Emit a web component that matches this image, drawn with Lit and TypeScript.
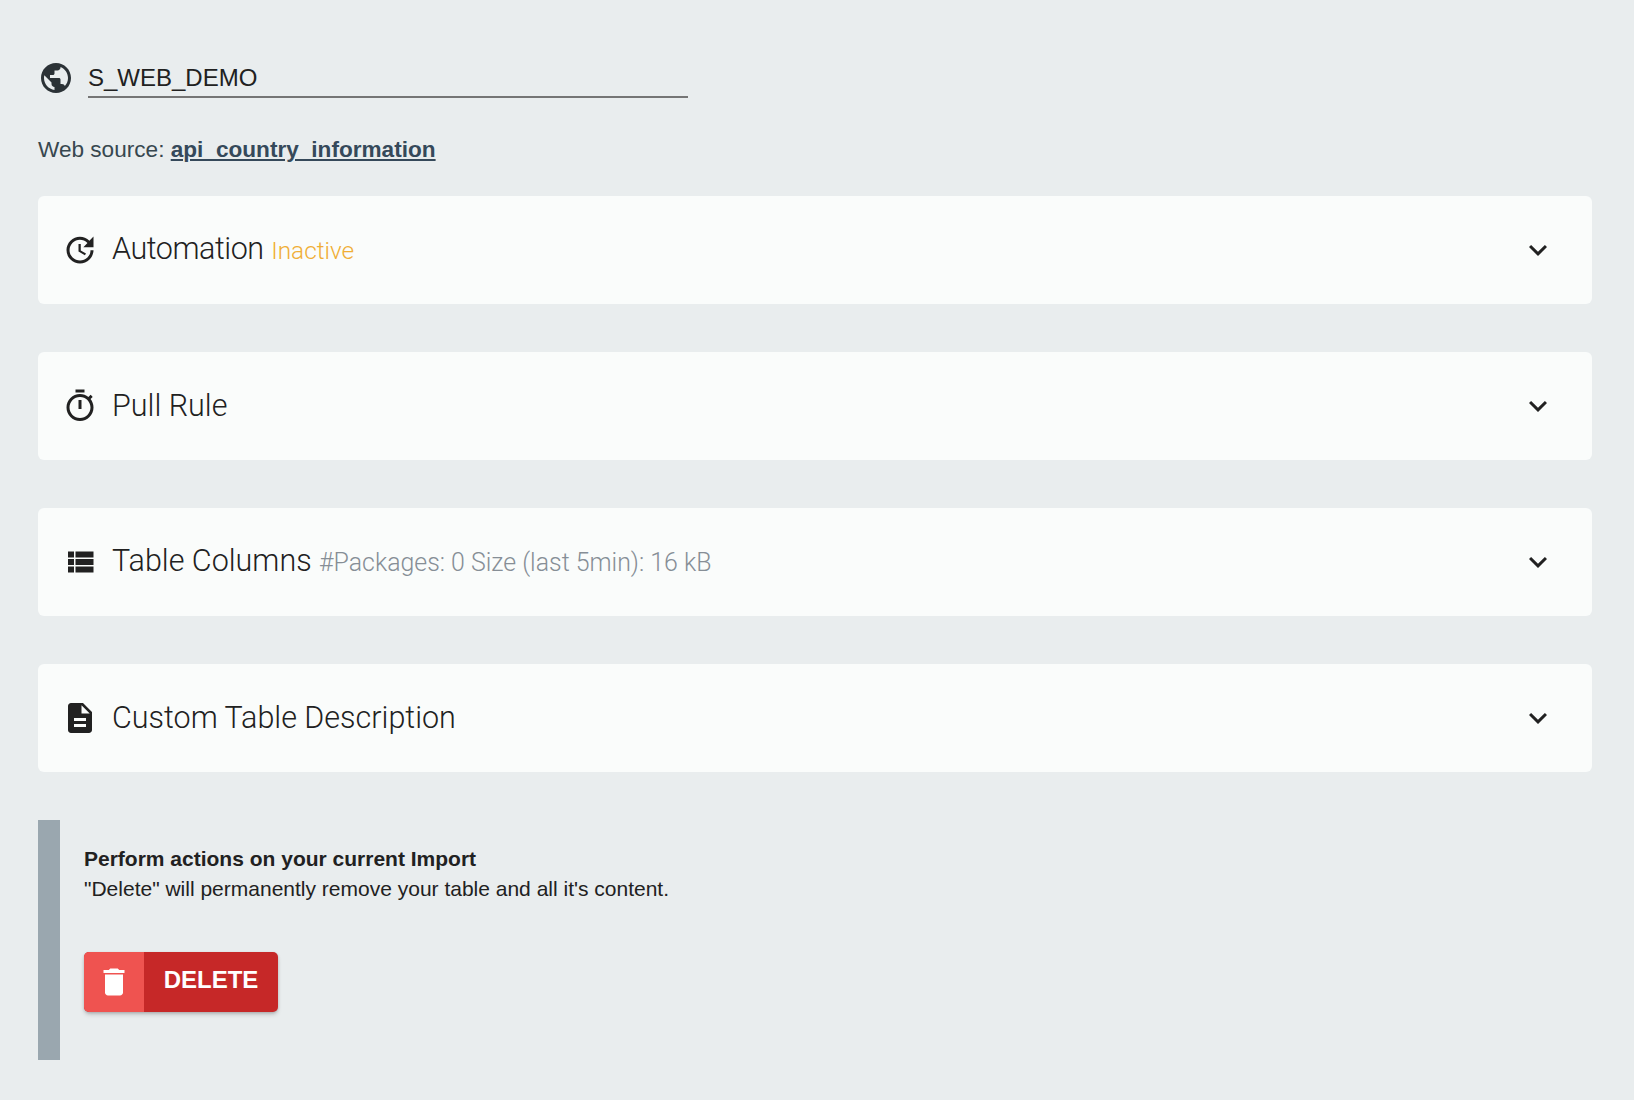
import { LitElement, html, css, svg } from "lit";
import { customElement } from "lit/decorators.js";

const P = {
  globe: "M12 2C6.48 2 2 6.48 2 12s4.48 10 10 10 10-4.48 10-10S17.52 2 12 2zm-1 17.93c-3.95-.49-7-3.85-7-7.93 0-.62.08-1.21.21-1.79L9 15v1c0 1.1.9 2 2 2v1.93zm6.9-2.54c-.26-.81-1-1.39-1.9-1.39h-1v-3c0-.55-.45-1-1-1H8v-2h2c.55 0 1-.45 1-1V7h2c1.1 0 2-.9 2-2v-.41c2.93 1.19 5 4.06 5 7.41 0 2.08-.8 3.97-2.1 5.39z",
  update: "M21 10.12h-6.78l2.74-2.82c-2.73-2.7-7.15-2.8-9.88-.1-2.73 2.71-2.73 7.08 0 9.79s7.15 2.71 9.88 0C18.32 15.65 19 14.08 19 12.1h2c0 1.98-.88 4.55-2.64 6.29-3.51 3.48-9.21 3.48-12.72 0-3.5-3.47-3.53-9.11-.02-12.58s9.14-3.47 12.65 0L21 3v7.12zM12.5 8v4.25l3.5 2.08-.72 1.21L11 13V8h1.5z",
  timer: "M15 1H9v2h6V1zm-4 13h2V8h-2v6zm8.03-6.61l1.42-1.42c-.43-.51-.9-.99-1.41-1.41l-1.42 1.42C16.07 4.74 14.12 4 12 4c-4.97 0-9 4.03-9 9s4.02 9 9 9 9-4.03 9-9c0-2.12-.74-4.07-1.97-5.61zM12 20c-3.87 0-7-3.13-7-7s3.13-7 7-7 7 3.13 7 7-3.13 7-7 7z",
  list: "M4 14h4v-4H4v4zm0 5h4v-4H4v4zM4 9h4V5H4v4zm5 5h12v-4H9v4zm0 5h12v-4H9v4zM9 5v4h12V5H9z",
  desc: "M14 2H6c-1.1 0-1.99.9-1.99 2L4 20c0 1.1.89 2 1.99 2H18c1.1 0 2-.9 2-2V8l-6-6zm2 16H8v-2h8v2zm0-4H8v-2h8v2zm-3-5V3.5L18.5 9H13z",
  more: "M16.59 8.59L12 13.17 7.41 8.59 6 10l6 6 6-6z",
  trash: "M6 19c0 1.1.9 2 2 2h8c1.1 0 2-.9 2-2V7H6v12zM19 4h-3.5l-1-1h-5l-1 1H5v2h14V4z",
};

const icon = (d: string) => html`<svg class="icon" viewBox="0 0 24 24" aria-hidden="true">${svg`<path d=${d}></path>`}</svg>`;

@customElement("app-root")
export class AppRoot extends LitElement {
  static styles = css`
    :host {
      display: block;
      min-height: 1100px;
      box-sizing: border-box;
      padding: 60px 42px 0 38px;
      background: #e9edee;
      color: #212121;
      font-family: "Liberation Sans", Arial, sans-serif;
    }
    .icon { width: 36px; height: 36px; fill: currentColor; flex: none; display: block; }
    .name { display: flex; align-items: flex-start; gap: 14px; color: #212121; }
    .name .icon { color: #2b3236; }
    .field {
      width: 600px;
      height: 38px;
      box-sizing: border-box;
      border-bottom: 2px solid #757575;
      font: 400 24px/30px "Liberation Sans", sans-serif;
      padding-top: 3px;
    }
    .source {
      margin-top: 34px;
      height: 36px;
      font-size: 22.6px;
      line-height: 36px;
      color: #37474f;
    }
    .source a { color: #35495a; font-weight: 700; text-decoration: underline; }
    .cards { display: flex; flex-direction: column; gap: 48px; margin-top: 28px; }
    .card {
      height: 108px;
      box-sizing: border-box;
      padding: 0 36px 0 24px;
      display: flex;
      align-items: center;
      background: #fafcfb;
      border-radius: 6px;
    }
    .title { flex: 1; margin-left: 14px; font: 300 30.5px/40px Roboto, sans-serif; color: #212121; white-space: nowrap; }
    .tight { letter-spacing: -0.45px; }
    .inactive { font-size: 24.4px; color: #f0ae35; }
    .stats { font-size: 24.9px; color: #868e96; }
    .actions {
      margin-top: 48px;
      height: 240px;
      box-sizing: border-box;
      border-left: 22px solid #9aa7af;
      padding: 24px 0 0 24px;
    }
    .lead { font: 700 21px/30px "Liberation Sans", sans-serif; color: #212121; }
    .note { font: 400 21px/30px "Liberation Sans", sans-serif; color: #212121; }
    .delete {
      margin-top: 48px;
      width: 194px;
      height: 60px;
      display: flex;
      border-radius: 5px;
      overflow: hidden;
      background: #c62828;
      color: #fff;
      box-shadow: 0 3px 5px -1px rgba(0,0,0,.2), 0 1px 3px rgba(0,0,0,.14);
    }
    .delete .side { width: 60px; display: flex; align-items: center; justify-content: center; background: #ef5350; }
    .delete .label { flex: 1; text-align: center; font: 700 24px/56px "Liberation Sans", sans-serif; }
  `;

  private card(i: string, title: unknown, sub?: unknown) {
    return html`<div class="card">${icon(i)}<div class="title">${title}${sub ? " " : ""}${sub}</div>${icon(P.more)}</div>`;
  }

  render() {
    return html`
      <div class="name">${icon(P.globe)}<div class="field">S_WEB_DEMO</div></div>
      <div class="source">Web source: <a>api_country_information</a></div>
      <div class="cards">
        ${this.card(P.update, html`<span class="tight">Automation</span>`, html`<span class="inactive">Inactive</span>`)}
        ${this.card(P.timer, "Pull Rule")}
        ${this.card(P.list, "Table Columns", html`<span class="stats">#Packages: 0 Size (last 5min): 16 kB</span>`)}
        ${this.card(P.desc, "Custom Table Description")}
      </div>
      <div class="actions">
        <div class="lead">Perform actions on your current Import</div>
        <div class="note">"Delete" will permanently remove your table and all it's content.</div>
        <div class="delete"><div class="side">${icon(P.trash)}</div><div class="label">DELETE</div></div>
      </div>
    `;
  }
}
